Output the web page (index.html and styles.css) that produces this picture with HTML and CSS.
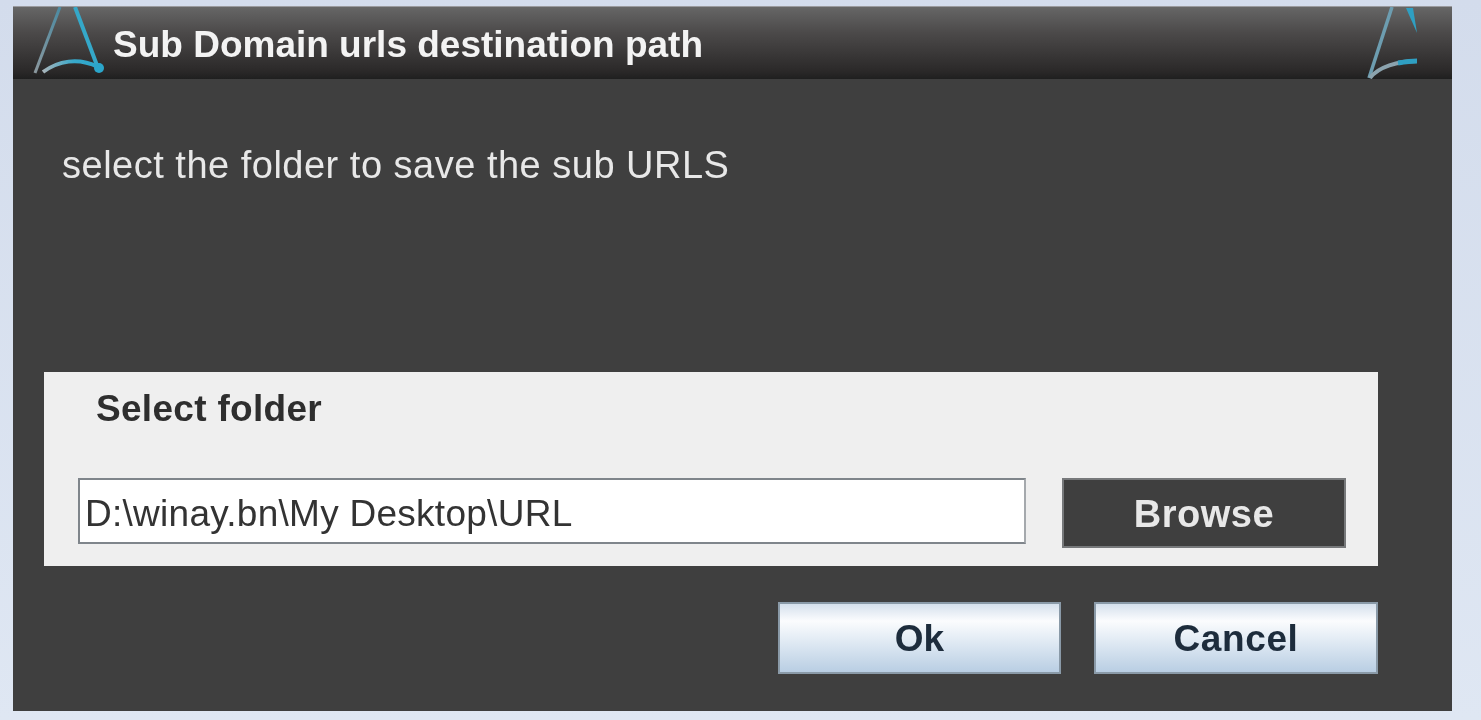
FILE: index.html
```html
<!DOCTYPE html>
<html lang="en">
<head>
    <meta charset="UTF-8">
    <meta name="viewport" content="width=device-width, initial-scale=1.0">
    <title>Sub Domain urls destination path</title>
    <link rel="stylesheet" href="styles.css">
</head>
<body>
    <div class="window">
        <!-- Title bar -->
        <div class="title-bar">
            <svg class="logo" width="88" height="72" viewBox="0 0 88 72" fill="none">
                <defs>
                    <linearGradient id="logoLeft" x1="0" y1="1" x2="1" y2="0">
                        <stop offset="0" stop-color="#8b979d"/>
                        <stop offset="1" stop-color="#4b8ba3"/>
                    </linearGradient>
                    <linearGradient id="logoCurve" x1="0" y1="0" x2="1" y2="0">
                        <stop offset="0" stop-color="#a8b4ba"/>
                        <stop offset="0.55" stop-color="#38a9cb"/>
                        <stop offset="1" stop-color="#2ba6cb"/>
                    </linearGradient>
                </defs>
                <path d="M40 0 L15 66" stroke="url(#logoLeft)" stroke-width="3"/>
                <path d="M55 0 L78 61" stroke="#35a8c9" stroke-width="4"/>
                <path d="M23 65 C38 54 58 50 78 60" stroke="url(#logoCurve)" stroke-width="4"/>
                <circle cx="79" cy="61" r="5" fill="#2ba6cb"/>
            </svg>
            <span class="title">Sub Domain urls destination path</span>
            <svg class="logo-faded" width="72" height="72" viewBox="0 0 72 72" fill="none">
                <path d="M28 0 L5 71" stroke="#6d9db0" stroke-width="3.5"/>
                <path d="M42 1 L49 1 L53 26 Z" fill="#2f9fc2"/>
                <path d="M6 71 C14 60 34 54 53 54" stroke="#8ba3ae" stroke-width="4"/>
                <path d="M34 56 C40 55 46 54 53 54" stroke="#2f9fc2" stroke-width="5"/>
            </svg>
        </div>

        <div class="content">
            <p class="message">select the folder to save the sub URLS</p>

            <!-- Folder section -->
            <div class="folder-panel">
                <h2>Select folder</h2>
                <div class="folder-row">
                    <input type="text" class="path-input" value="D:\winay.bn\My Desktop\URL">
                    <button class="browse-btn">Browse</button>
                </div>
            </div>

            <div class="actions">
                <button class="action-btn">Ok</button>
                <button class="action-btn cancel-btn">Cancel</button>
            </div>
        </div>
    </div>
</body>
</html>
```

FILE: styles.css
```css
:root {
    --window-bg: #3f3f3f;
    --panel-bg: #efefef;
    --text-light: #e8e8e8;
    --text-dark: #2e2e2e;
}

html, body {
    height: 100%;
}

body {
    margin: 0;
    box-sizing: border-box;
    height: 720px;
    padding: 7px 29px 9px 13px;
    overflow: hidden;
    font-family: "Liberation Sans", Arial, sans-serif;
    background: linear-gradient(180deg, #d3dcec 0%, #dfe7f3 100%);
}

/* the reference is a soft, upscaled capture */
.window {
    display: flex;
    flex-direction: column;
    height: 100%;
    background-color: var(--window-bg);
    box-shadow: 0 -1px 0 #9a9a9e;
    filter: blur(0.6px);
}

.title-bar {
    position: relative;
    display: flex;
    align-items: center;
    flex: 0 0 72px;
    overflow: hidden;
    padding-left: 100px;
    background: linear-gradient(180deg, #666 0%, #4c4a4a 35%, #2a2828 90%, #1f1f1f 100%);
}

.title {
    padding-top: 3px;
    font-size: 37px;
    font-weight: bold;
    color: #f3f3f3;
    white-space: nowrap;
}

.logo {
    position: absolute;
    left: 7px;
    top: 0;
}

.logo-faded {
    position: absolute;
    right: 16px;
    top: 0;
}

.content {
    display: flex;
    flex-direction: column;
    flex: 1;
    padding: 0 74px 37px 31px;
}

.message {
    margin: 65px 0 0 18px;
    height: 228px;
    font-size: 38px;
    letter-spacing: 0.5px;
    line-height: 42px;
    color: var(--text-light);
}

.folder-panel {
    box-sizing: border-box;
    height: 194px;
    padding: 15px 32px 0 34px;
    background-color: var(--panel-bg);
}

.folder-panel h2 {
    margin: 0 0 0 18px;
    height: 91px;
    font-size: 37px;
    letter-spacing: 0.3px;
    line-height: 44px;
    color: var(--text-dark);
}

.folder-row {
    display: flex;
    align-items: flex-start;
    gap: 36px;
}

.path-input {
    box-sizing: border-box;
    width: 948px;
    height: 66px;
    padding: 6px 0 0 5px;
    border: 2px solid #7f858b;
    border-right-color: #a5a9ad;
    background-color: #fff;
    font-family: "Liberation Sans", Arial, sans-serif;
    font-size: 37px;
    letter-spacing: 0.27px;
    color: #333;
}

.browse-btn {
    box-sizing: border-box;
    width: 284px;
    height: 70px;
    padding: 3px 0 0;
    border: 2px solid #77797b;
    background-color: var(--window-bg);
    font-family: "Liberation Sans", Arial, sans-serif;
    font-size: 38px;
    font-weight: bold;
    letter-spacing: 0.5px;
    color: var(--text-light);
}

.actions {
    display: flex;
    justify-content: flex-end;
    gap: 33px;
    margin-top: 36px;
}

.action-btn {
    box-sizing: border-box;
    width: 283px;
    height: 72px;
    padding: 2px 0 0;
    border: 2px solid #8a9aa8;
    background: linear-gradient(180deg, #d5e0ec 0%, #fbfcfe 25%, #dce7f2 60%, #b9cee3 100%);
    font-family: "Liberation Sans", Arial, sans-serif;
    font-size: 37px;
    font-weight: bold;
    color: #1d2c3c;
}

.cancel-btn {
    width: 284px;
    letter-spacing: 0.6px;
}
```
